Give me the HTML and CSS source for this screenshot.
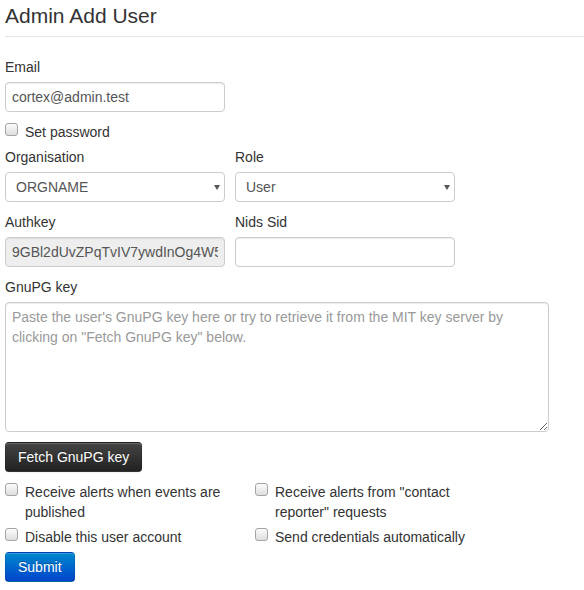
FILE: index.html
```html
<!DOCTYPE html>
<html>
<head>
<meta charset="utf-8">
<title>Admin Add User</title>
<link rel="stylesheet" href="styles.css">
</head>
<body>
<div class="page">
  <form class="form">
    <h2 class="legend">Admin Add User</h2>

    <div class="field">
      <label class="lbl">Email</label>
      <input class="text w220" type="text" value="cortex@admin.test">
    </div>

    <label class="check"><input type="checkbox"><span>Set password</span></label>

    <div class="row">
      <div class="field">
        <label class="lbl">Organisation</label>
        <div class="select-wrap"><select class="sel"><option>ORGNAME</option></select></div>
      </div>
      <div class="field">
        <label class="lbl">Role</label>
        <div class="select-wrap"><select class="sel"><option>User</option></select></div>
      </div>
    </div>

    <div class="row">
      <div class="field">
        <label class="lbl">Authkey</label>
        <input class="text w220" type="text" value="9GBl2dUvZPqTvIV7ywdInOg4W5xhCm3oCoYzUzB7" disabled>
      </div>
      <div class="field">
        <label class="lbl">Nids Sid</label>
        <input class="text w220" type="text" value="">
      </div>
    </div>

    <div class="field">
      <label class="lbl">GnuPG key</label>
      <textarea class="area" placeholder="Paste the user's GnuPG key here or try to retrieve it from the MIT key server by clicking on &quot;Fetch GnuPG key&quot; below."></textarea>
    </div>

    <button type="button" class="btn btn-inverse">Fetch GnuPG key</button>

    <div class="check-row">
      <label class="check col"><input type="checkbox"><span>Receive alerts when events are published</span></label>
      <label class="check col"><input type="checkbox"><span>Receive alerts from "contact reporter" requests</span></label>
    </div>
    <div class="check-row">
      <label class="check col"><input type="checkbox"><span>Disable this user account</span></label>
      <label class="check col"><input type="checkbox"><span>Send credentials automatically</span></label>
    </div>

    <button type="button" class="btn btn-primary">Submit</button>
  </form>
</div>
</body>
</html>
```
FILE: styles.css
```css
* { box-sizing: border-box; }

html, body {
  margin: 0;
  padding: 0;
  background: #fff;
}

body {
  font-family: "Liberation Sans", Arial, Helvetica, sans-serif;
  font-size: 14px;
  line-height: 20px;
  color: #333;
}

.page {
  padding: 0 0 0 5px;
}

.form {
  margin: 0;
  display: flex;
  flex-direction: column;
  align-items: flex-start;
}

.legend {
  align-self: stretch;
  margin: 0 0 20px 0;
  padding: 0 0 4px 0;
  font-size: 21px;
  font-weight: normal;
  line-height: 32px;
  color: #333;
  border-bottom: 1px solid #e5e5e5;
}

.field {
  display: flex;
  flex-direction: column;
  align-items: flex-start;
  margin-bottom: 10px;
}

.lbl {
  display: block;
  margin-bottom: 5px;
  line-height: 20px;
}

.row {
  display: flex;
  gap: 10px;
}

.text,
.sel,
.area {
  font-family: "Liberation Sans", Arial, Helvetica, sans-serif;
  font-size: 14px;
  line-height: 20px;
  color: #555;
  background-color: #fff;
  border: 1px solid #ccc;
  border-radius: 4px;
  box-shadow: inset 0 1px 1px rgba(0, 0, 0, 0.075);
  margin: 0;
  outline: none;
}

.text {
  height: 30px;
  padding: 4px 6px;
}

.w220 { width: 220px; }

.text:disabled {
  background-color: #eee;
  color: #555;
  cursor: not-allowed;
  opacity: 1;
  -webkit-text-fill-color: #555;
}

.select-wrap {
  position: relative;
  width: 220px;
}

.select-wrap::after {
  content: "";
  position: absolute;
  right: 5px;
  top: 13px;
  border-left: 3px solid transparent;
  border-right: 3px solid transparent;
  border-top: 5px solid #555;
  pointer-events: none;
}

.sel {
  -webkit-appearance: none;
  appearance: none;
  display: block;
  width: 220px;
  height: 30px;
  padding: 4px 20px 4px 10px;
  box-shadow: none;
}

.area {
  display: block;
  width: 544px;
  height: 130px;
  padding: 4px 6px;
  resize: both;
}

.area::placeholder {
  color: #999;
}

.check {
  display: flex;
  align-items: flex-start;
  margin-bottom: 5px;
  line-height: 20px;
  color: #333;
  cursor: pointer;
}

.check input {
  -webkit-appearance: none;
  appearance: none;
  flex: 0 0 13px;
  width: 13px;
  height: 13px;
  margin: 1px 7px 0 0;
  border: 1px solid #a3a3a3;
  border-radius: 3px;
  background: linear-gradient(to bottom, #fcfcfc, #dedede);
}

.check-row {
  display: flex;
}

.check.col {
  width: 250px;
  padding-right: 10px;
}

.btn {
  display: inline-block;
  height: 30px;
  padding: 4px 12px;
  font-family: "Liberation Sans", Arial, Helvetica, sans-serif;
  font-size: 14px;
  line-height: 20px;
  color: #fff;
  text-align: center;
  text-shadow: 0 -1px 0 rgba(0, 0, 0, 0.25);
  border: 1px solid;
  border-color: rgba(0, 0, 0, 0.1) rgba(0, 0, 0, 0.1) rgba(0, 0, 0, 0.25);
  border-radius: 4px;
  box-shadow: inset 0 1px 0 rgba(255, 255, 255, 0.2), 0 1px 2px rgba(0, 0, 0, 0.05);
  cursor: pointer;
}

.btn-inverse {
  background-color: #363636;
  background-image: linear-gradient(to bottom, #444444, #222222);
  margin-bottom: 10px;
}

.btn-primary {
  background-color: #006dcc;
  background-image: linear-gradient(to bottom, #0088cc, #0044cc);
}
```
